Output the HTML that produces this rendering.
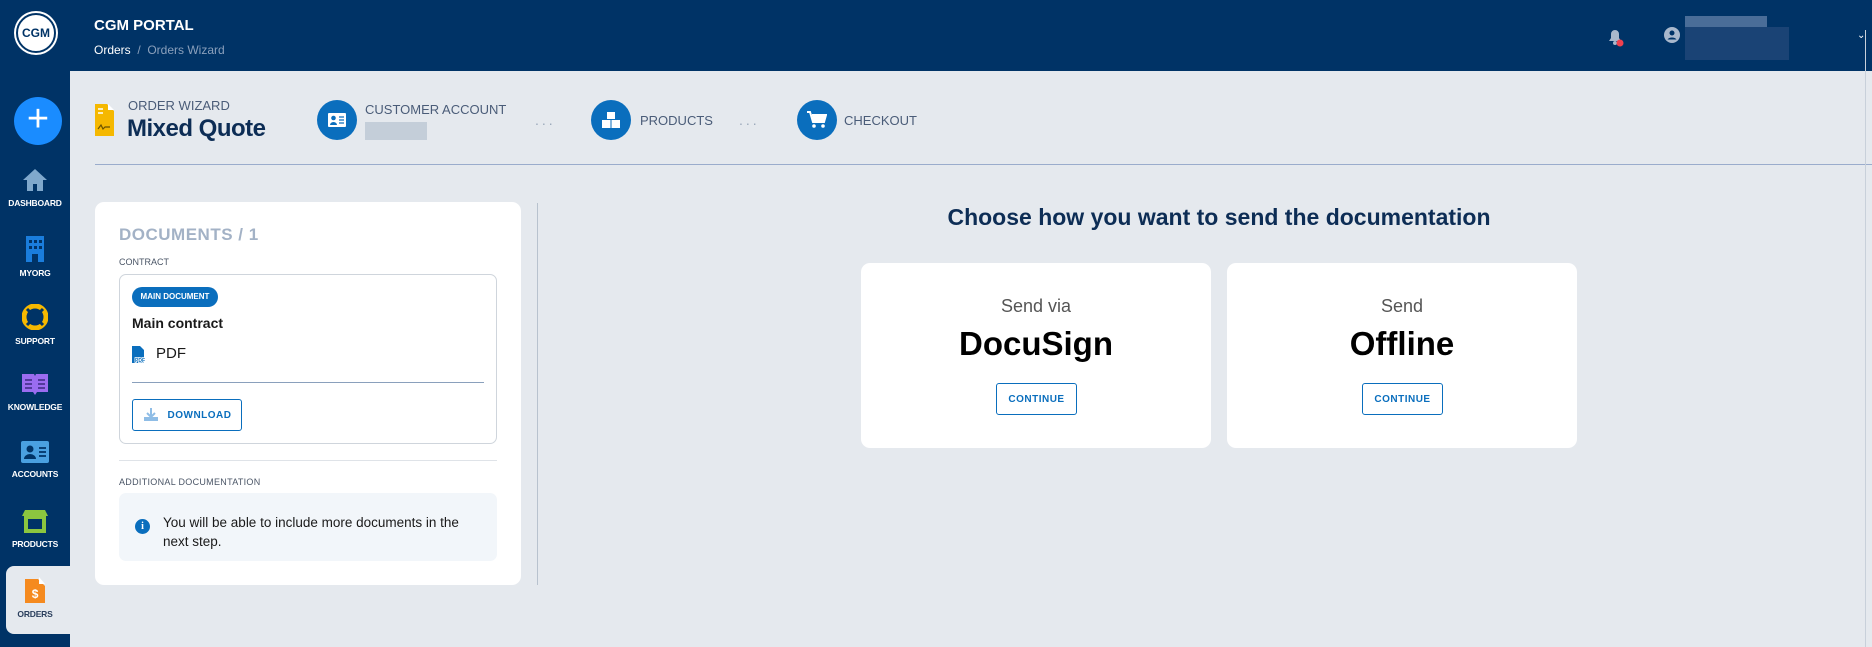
<!DOCTYPE html>
<html><head><meta charset="utf-8"><style>
*{box-sizing:border-box;margin:0;padding:0}
body{width:1872px;height:647px;overflow:hidden;background:#e5e9ee;font-family:"Liberation Sans",sans-serif;position:relative}
.abs{position:absolute}
.hdr{left:0;top:0;width:1872px;height:71px;background:#003366}
.side{left:0;top:71px;width:70px;height:576px;background:#003366}
.nav{position:absolute;left:0;width:70px;text-align:center;color:#fff;font-size:8.5px;font-weight:bold;letter-spacing:-0.2px}
.nav svg{display:block;margin:0 auto 6px}
.card{background:#fff;border-radius:9px}
.circ{width:40px;height:40px;border-radius:50%;background:#0a6ebd;display:flex;align-items:center;justify-content:center}
.step{font-size:13px;color:#4a5c78}
.dots{color:#9aa8ba;font-size:14px;letter-spacing:3px}
.btn{border:1px solid #0a6ebd;border-radius:3px;color:#0a6ebd;font-size:10px;font-weight:bold;letter-spacing:.5px;display:flex;align-items:center;justify-content:center;background:#fff}
</style></head><body>
<div class="abs hdr"></div>
<div class="abs" style="left:16px;top:13px;width:40px;height:40px;border-radius:50%;background:#fff;border:2px solid #003366;box-shadow:0 0 0 2px #fff;display:flex;align-items:center;justify-content:center;font-size:12px;font-weight:bold;color:#003366">CGM</div>
<div class="abs" style="left:94px;top:17px;color:#fff;font-size:15px;font-weight:bold">CGM PORTAL</div>
<div class="abs" style="left:94px;top:43px;font-size:12px;color:#fff">Orders <span style="color:#8aa0bc">&nbsp;/&nbsp; Orders Wizard</span></div>
<svg class="abs" style="left:1605px;top:26px" width="22" height="22" viewBox="0 0 22 22"><path d="M4 15h12l-2-3V8a4 4 0 0 0-8 0v4z" fill="#a9b8cc"/><circle cx="10" cy="17" r="2" fill="#a9b8cc"/><circle cx="15" cy="17" r="3.5" fill="#f0414f"/></svg>
<svg class="abs" style="left:1664px;top:27px" width="16" height="16" viewBox="0 0 16 16"><circle cx="8" cy="8" r="8" fill="#a9b8cc"/><circle cx="8" cy="6" r="2.5" fill="#003366"/><path d="M3.5 12.5a5 3.5 0 0 1 9 0" fill="#003366"/></svg>
<div class="abs" style="left:1685px;top:16px;width:82px;height:11px;background:#4a6d98"></div>
<div class="abs" style="left:1685px;top:27px;width:104px;height:33px;background:#1a4375"></div>
<div class="abs" style="left:1857px;top:30px;color:#fff;font-size:10px">&#8964;</div>

<div class="abs side"></div>
<div class="abs" style="left:14px;top:97px;width:48px;height:48px;border-radius:50%;background:#1a8cff;color:#fff;font-size:38px;line-height:44px;text-align:center">+</div>
<div class="nav" style="top:168px"><svg width="26" height="24" viewBox="0 0 26 24"><path d="M13 1L1 12h4v11h6v-7h4v7h6V12h4z" fill="#7fa8cc"/></svg>DASHBOARD</div>
<div class="nav" style="top:236px"><svg width="20" height="26" viewBox="0 0 20 26"><rect x="1" y="0" width="18" height="26" fill="#1a7ddc"/><g fill="#003366"><rect x="4" y="4" width="3" height="3"/><rect x="9" y="4" width="3" height="3"/><rect x="14" y="4" width="3" height="3"/><rect x="4" y="10" width="3" height="3"/><rect x="9" y="10" width="3" height="3"/><rect x="14" y="10" width="3" height="3"/><rect x="7" y="18" width="6" height="8"/></g></svg>MYORG</div>
<div class="nav" style="top:304px"><svg width="26" height="26" viewBox="0 0 26 26"><circle cx="13" cy="13" r="11" fill="none" stroke="#f5b800" stroke-width="5"/><g stroke="#003366" stroke-width="3"><path d="M5 5l5 5M21 5l-5 5M5 21l5-5M21 21l-5-5"/></g></svg>SUPPORT</div>
<div class="nav" style="top:372px"><svg width="28" height="24" viewBox="0 0 28 24"><path d="M1 2h12l1 2 1-2h12v18H16l-2 3-2-3H1z" fill="#9a6cf0"/><g stroke="#3b2a80" stroke-width="1.6"><path d="M4 8h7M4 12h7M4 16h7M17 8h7M17 12h7M17 16h7"/></g></svg>KNOWLEDGE</div>
<div class="nav" style="top:441px"><svg width="28" height="22" viewBox="0 0 28 22"><rect width="28" height="22" rx="2" fill="#4aa0e0"/><circle cx="9" cy="8" r="3.5" fill="#003366"/><path d="M3 18a6 5 0 0 1 12 0z" fill="#003366"/><path d="M18 7h7M18 11h7M18 15h7" stroke="#003366" stroke-width="1.8"/></svg>ACCOUNTS</div>
<div class="nav" style="top:509px"><svg width="26" height="24" viewBox="0 0 26 24"><path d="M3 1h20l3 6H0z" fill="#8cc63f"/><rect x="2" y="7" width="22" height="17" fill="#8cc63f"/><rect x="6" y="10" width="14" height="10" fill="#003366"/></svg>PRODUCTS</div>
<div class="abs" style="left:6px;top:566px;width:64px;height:68px;background:#e5e9ee;border-radius:8px 0 0 8px"></div>
<div class="nav" style="top:577px;color:#2a3e5c"><svg width="20" height="26" viewBox="0 0 20 26"><path d="M0 2h13l7 7v17H0z" fill="#f58a1f"/><path d="M14 0v7h6" fill="#fff"/><text x="10" y="21" font-size="12" font-weight="bold" fill="#fff" text-anchor="middle" font-family="Liberation Sans">$</text></svg>ORDERS</div>

<svg class="abs" style="left:95px;top:104px" width="19" height="32" viewBox="0 0 19 32"><path d="M0 0h12l7 7v25H0z" fill="#f5b800"/><path d="M13 0v6h6z" fill="#fff"/><path d="M3 5h5M3 9h5" stroke="#fff" stroke-width="1.5"/><path d="M3 25l3-4 2 4 2-2h5" stroke="#6b5200" stroke-width="1.2" fill="none"/></svg>
<div class="abs" style="left:128px;top:98px;font-size:13px;color:#4a5c78">ORDER WIZARD</div>
<div class="abs" style="left:127px;top:115px;font-size:24px;font-weight:bold;color:#0d2d55;letter-spacing:-0.5px">Mixed Quote</div>

<div class="abs circ" style="left:317px;top:100px"><svg width="18" height="14" viewBox="0 0 18 14"><rect width="18" height="14" rx="1" fill="#fff"/><circle cx="5.5" cy="5" r="2.3" fill="#0a6ebd"/><path d="M2 12a3.5 3 0 0 1 7 0z" fill="#0a6ebd"/><path d="M11 4h5M11 7h5M11 10h5" stroke="#0a6ebd" stroke-width="1.3"/></svg></div>
<div class="abs step" style="left:365px;top:102px">CUSTOMER ACCOUNT</div>
<div class="abs" style="left:365px;top:122px;width:62px;height:18px;background:#c4ced9"></div>
<div class="abs dots" style="left:535px;top:112px">...</div>
<div class="abs circ" style="left:591px;top:100px"><svg width="18" height="18" viewBox="0 0 18 18"><rect x="5" y="1" width="8" height="7" fill="#fff"/><rect x="0" y="9" width="8.5" height="8" fill="#fff"/><rect x="9.5" y="9" width="8.5" height="8" fill="#fff"/></svg></div>
<div class="abs step" style="left:640px;top:113px">PRODUCTS</div>
<div class="abs dots" style="left:739px;top:112px">...</div>
<div class="abs circ" style="left:797px;top:100px"><svg width="20" height="18" viewBox="0 0 20 18"><path d="M0 1h3l3 10h11l2-7H5" fill="none" stroke="#fff" stroke-width="2"/><path d="M5 4h14l-2 7H6z" fill="#fff"/><circle cx="7" cy="15" r="1.8" fill="#fff"/><circle cx="16" cy="15" r="1.8" fill="#fff"/></svg></div>
<div class="abs step" style="left:844px;top:113px">CHECKOUT</div>
<div class="abs" style="left:95px;top:164px;width:1777px;height:1px;background:#9aaccc"></div>

<div class="abs card" style="left:95px;top:202px;width:426px;height:383px"></div>
<div class="abs" style="left:119px;top:225px;font-size:17px;font-weight:bold;color:#a3b2c6;letter-spacing:.5px">DOCUMENTS / 1</div>
<div class="abs" style="left:119px;top:257px;font-size:9px;color:#4a5566">CONTRACT</div>
<div class="abs" style="left:119px;top:274px;width:378px;height:170px;border:1px solid #cfd5dc;border-radius:7px"></div>
<div class="abs" style="left:132px;top:287px;width:86px;height:20px;border-radius:10px;background:#0a6ebd;color:#fff;font-size:8px;font-weight:bold;text-align:center;line-height:20px">MAIN DOCUMENT</div>
<div class="abs" style="left:132px;top:315px;font-size:14px;font-weight:bold;color:#1a1a1a">Main contract</div>
<svg class="abs" style="left:132px;top:346px" width="16" height="17" viewBox="0 0 16 17"><path d="M0 0h8l4 4v13H0z" fill="#0a6ebd"/><text x="3" y="16" font-size="5" font-weight="bold" fill="#0a6ebd" font-family="Liberation Sans" style="paint-order:stroke" stroke="#fff" stroke-width="1.5">PDF</text></svg>
<div class="abs" style="left:156px;top:345px;font-size:15px;color:#1a1a1a">PDF</div>
<div class="abs" style="left:132px;top:382px;width:352px;height:1px;background:#8aa0bc"></div>
<div class="abs btn" style="left:132px;top:399px;width:110px;height:32px"><svg width="16" height="14" viewBox="0 0 16 14" style="margin-right:9px"><path d="M8 0v8M4 5l4 4 4-4" stroke="#8fbde6" stroke-width="2" fill="none"/><path d="M1 9v4h14V9" fill="#8fbde6"/></svg>DOWNLOAD</div>
<div class="abs" style="left:119px;top:460px;width:378px;height:1px;background:#dfe3e8"></div>
<div class="abs" style="left:119px;top:477px;font-size:9px;color:#4a5566;letter-spacing:.3px">ADDITIONAL DOCUMENTATION</div>
<div class="abs" style="left:119px;top:493px;width:378px;height:68px;background:#f2f6fa;border-radius:7px"></div>
<div class="abs" style="left:135px;top:519px;width:15px;height:15px;border-radius:50%;background:#0a6ebd;color:#fff;font-size:10px;font-weight:bold;text-align:center;line-height:15px;font-family:'Liberation Serif',serif">i</div>
<div class="abs" style="left:163px;top:513px;width:320px;font-size:13.5px;line-height:19px;color:#1a1a1a">You will be able to include more documents in the next step.</div>
<div class="abs" style="left:537px;top:203px;width:1px;height:382px;background:#b8c2ce"></div>

<div class="abs" style="left:861px;top:204px;width:716px;text-align:center;font-size:23px;font-weight:bold;color:#0d2d55">Choose how you want to send the documentation</div>
<div class="abs card" style="left:861px;top:263px;width:350px;height:185px"></div>
<div class="abs" style="left:861px;top:296px;width:350px;text-align:center;font-size:18px;color:#555">Send via</div>
<div class="abs" style="left:861px;top:325px;width:350px;text-align:center;font-size:33px;font-weight:bold;color:#000">DocuSign</div>
<div class="abs btn" style="left:996px;top:383px;width:81px;height:32px">CONTINUE</div>
<div class="abs card" style="left:1227px;top:263px;width:350px;height:185px"></div>
<div class="abs" style="left:1227px;top:296px;width:350px;text-align:center;font-size:18px;color:#555">Send</div>
<div class="abs" style="left:1227px;top:325px;width:350px;text-align:center;font-size:33px;font-weight:bold;color:#000">Offline</div>
<div class="abs btn" style="left:1362px;top:383px;width:81px;height:32px">CONTINUE</div>
<div class="abs" style="left:1865px;top:30px;width:1px;height:617px;background:#c8d0da"></div>
</body></html>
